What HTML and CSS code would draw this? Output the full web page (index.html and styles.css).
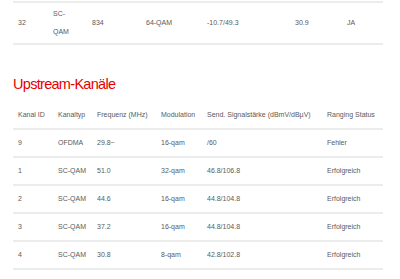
FILE: index.html
```html
<!DOCTYPE html>
<html lang="de">
<head>
<meta charset="utf-8">
<title>Upstream-Kanäle</title>
<link rel="stylesheet" href="styles.css">
</head>
<body>
<div class="wrap">
  <table class="tbl tbl-down">
    <colgroup>
      <col class="d1"><col class="d2"><col class="d3"><col class="d4"><col class="d5"><col class="d6"><col class="d7">
    </colgroup>
    <tbody>
      <tr>
        <td>32</td>
        <td class="narrow">SC-QAM</td>
        <td>834</td>
        <td>64-QAM</td>
        <td>-10.7/49.3</td>
        <td>30.9</td>
        <td>JA</td>
      </tr>
    </tbody>
  </table>

  <h2 class="title">Upstream-Kanäle</h2>

  <table class="tbl tbl-up">
    <colgroup>
      <col class="u1"><col class="u2"><col class="u3"><col class="u4"><col class="u5"><col class="u6">
    </colgroup>
    <thead>
      <tr>
        <th>Kanal ID</th>
        <th>Kanaltyp</th>
        <th>Frequenz (MHz)</th>
        <th>Modulation</th>
        <th>Send. Signalstärke (dBmV/dBµV)</th>
        <th>Ranging Status</th>
      </tr>
    </thead>
    <tbody>
      <tr><td>9</td><td>OFDMA</td><td>29.8~</td><td>16-qam</td><td>/60</td><td>Fehler</td></tr>
      <tr><td>1</td><td>SC-QAM</td><td>51.0</td><td>32-qam</td><td>46.8/106.8</td><td>Erfolgreich</td></tr>
      <tr><td>2</td><td>SC-QAM</td><td>44.6</td><td>16-qam</td><td>44.8/104.8</td><td>Erfolgreich</td></tr>
      <tr><td>3</td><td>SC-QAM</td><td>37.2</td><td>16-qam</td><td>44.8/104.8</td><td>Erfolgreich</td></tr>
      <tr><td>4</td><td>SC-QAM</td><td>30.8</td><td>8-qam</td><td>42.8/102.8</td><td>Erfolgreich</td></tr>
    </tbody>
  </table>
</div>
</body>
</html>
```
FILE: styles.css
```css
html, body {
  margin: 0;
  padding: 0;
  background: #ffffff;
}

.wrap {
  width: 370px;
  padding: 1px 17px 0 13px;
  font-family: "Liberation Sans", Arial, sans-serif;
  font-size: 7px;
  color: #5a5a5a;
}

.tbl {
  width: 370px;
  table-layout: fixed;
  border-collapse: collapse;
  border-spacing: 0;
}

.tbl td,
.tbl th {
  text-align: left;
  font-weight: normal;
  vertical-align: middle;
  padding: 0 5px;
  white-space: nowrap;
}

/* top (downstream) table, last row only */
.tbl-down td {
  border-top: 2px solid #ececec;
  border-bottom: 2px solid #ececec;
  padding-top: 2px;
  padding-bottom: 2px;
  line-height: 18px;
}

.tbl-down td.narrow {
  white-space: normal;
  padding-right: 12px;
}

.d1 { width: 35px; }
.d2 { width: 39px; }
.d3 { width: 54px; }
.d4 { width: 61px; }
.d5 { width: 88px; }
.d6 { width: 52px; }
.d7 { width: 41px; }

.title {
  margin: 29px 0 0;
  font-family: "Liberation Sans", Arial, sans-serif;
  font-size: 14.5px;
  letter-spacing: -0.7px;
  line-height: 20px;
  font-weight: normal;
  color: #e60000;
}

.tbl-up {
  margin-top: 8px;
}

.tbl-up th,
.tbl-up td {
  line-height: 26px;
  border-bottom: 2px solid #ececec;
}

.u1 { width: 40px; }
.u2 { width: 39px; }
.u3 { width: 64px; }
.u4 { width: 46px; }
.u5 { width: 120px; }
.u6 { width: 61px; }
```
